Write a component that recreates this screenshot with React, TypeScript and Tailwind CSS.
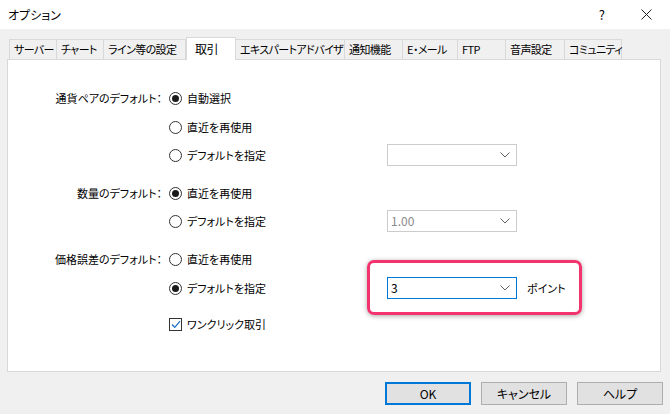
import React from 'react';

const tabs: { label: string; width: string }[] = [
  { label: 'サーバー', width: 'w-[48px]' },
  { label: 'チャート', width: 'w-[48px]' },
  { label: 'ライン等の設定', width: 'w-[83px]' },
  { label: '取引', width: 'w-[50px]' },
  { label: 'エキスパートアドバイザ', width: 'w-[110px]' },
  { label: '通知機能', width: 'w-[59px]' },
  { label: 'E・メール', width: 'w-[56px]' },
  { label: 'FTP', width: 'w-[49px]' },
  { label: '音声設定', width: 'w-[60px]' },
  { label: 'コミュニティ', width: 'w-[58px]' },
];

const Radio = ({ checked, label }: { checked?: boolean; label: string }) => (
  <div className="flex items-center">
    <span className="flex h-[13px] w-[13px] items-center justify-center rounded-full border border-[#333333] bg-white">
      {checked && <span className="h-[7px] w-[7px] rounded-full bg-[#1a1a1a]" />}
    </span>
    <span className="ml-[5px]">{label}</span>
  </div>
);

const Chevron = () => (
  <svg width="10" height="6" viewBox="0 0 10 6" className="mr-[6px]">
    <path d="M0.5 0.5 L5 5 L9.5 0.5" fill="none" stroke="#606060" strokeWidth="1" />
  </svg>
);

const Select = ({ value, active, disabled }: { value?: string; active?: boolean; disabled?: boolean }) => (
  <div
    className={`flex h-[22px] w-[130px] items-center justify-between bg-white ${
      active ? 'border border-[#0078d7]' : 'border border-[#cccccc]'
    }`}
  >
    <span className={`pl-[3px] text-[12px] ${disabled ? 'text-[#8a8a8a]' : 'text-black'}`}>{value}</span>
    <Chevron />
  </div>
);

const Row = ({ label, mt, children }: { label?: string; mt: string; children: React.ReactNode }) => (
  <div className={`flex h-[28px] items-center ${mt}`}>
    <div className="w-[154px] shrink-0 whitespace-nowrap text-right">{label}</div>
    <div className="ml-[7px] flex flex-1 items-center">{children}</div>
  </div>
);

const Button = ({ label, primary }: { label: string; primary?: boolean }) => (
  <div
    className={`flex h-[23px] w-[86px] items-center justify-center bg-[#e1e1e1] ${
      primary ? 'border-2 border-[#0078d7]' : 'border border-[#adadad]'
    }`}
  >
    {label}
  </div>
);

export default function App() {
  return (
    <div
      className="flex h-[414px] w-[670px] flex-col overflow-hidden bg-[#f0f0f0] text-[11px] leading-none text-black [font-feature-settings:'palt']"
      style={{ fontFamily: '"Noto Sans CJK JP", "Noto Sans", sans-serif' }}
    >
      {/* title bar */}
      <div className="flex h-[29px] shrink-0 items-center bg-white">
        <span className="ml-[8px] flex-1 text-[12px]">オプション</span>
        <span className="mr-[36px] text-[13px]">?</span>
        <svg width="11" height="11" viewBox="0 0 11 11" className="mr-[18px]">
          <path d="M0.5 0.5 L10.5 10.5 M10.5 0.5 L0.5 10.5" stroke="#222" strokeWidth="1" />
        </svg>
      </div>

      {/* tabs */}
      <div className="ml-[9px] mt-[8px] flex h-[22px] items-end tracking-[-0.6px]">
        {tabs.map((t) =>
          t.label === '取引' ? (
            <div
              key={t.label}
              className={`${t.width} relative z-10 -mb-px flex h-[23px] items-center whitespace-nowrap border border-b-0 border-[#d9d9d9] bg-white pl-[8px] text-[12px]`}
            >
              {t.label}
            </div>
          ) : (
            <div
              key={t.label}
              className={`${t.width} -ml-px flex h-[20px] items-center whitespace-nowrap border border-b-0 border-[#d9d9d9] bg-[#f0f0f0] pl-[4px] first:ml-0`}
            >
              {t.label}
            </div>
          )
        )}
      </div>

      {/* panel */}
      <div className="ml-[7px] h-[313px] w-[654px] border border-[#d9d9d9] bg-white pt-[24px]">
        <Row label="通貨ペアのデフォルト：" mt="mt-0">
          <Radio checked label="自動選択" />
        </Row>
        <Row mt="mt-px">
          <Radio label="直近を再使用" />
        </Row>
        <Row mt="mt-0">
          <div className="w-[218px]">
            <Radio label="デフォルトを指定" />
          </div>
          <Select disabled />
        </Row>
        <Row label="数量のデフォルト：" mt="mt-[10px]">
          <Radio checked label="直近を再使用" />
        </Row>
        <Row mt="mt-0">
          <div className="w-[218px]">
            <Radio label="デフォルトを指定" />
          </div>
          <Select value="1.00" disabled />
        </Row>
        <Row label="価格誤差のデフォルト：" mt="mt-[10px]">
          <Radio label="直近を再使用" />
        </Row>
        <Row mt="mt-px">
          <div className="w-[218px]">
            <Radio checked label="デフォルトを指定" />
          </div>
          <div className="relative flex items-center">
            <Select value="3" active />
            <span className="ml-[10px]">ポイント</span>
            <div className="pointer-events-none absolute left-[-20px] top-[-17px] h-[55px] w-[215px] rounded-[7px] border-[3px] border-[#f2336e] shadow-[0_1px_5px_rgba(0,0,0,0.35)]" />
          </div>
        </Row>
        <Row mt="mt-[8px]">
          <div className="flex items-center">
            <span className="flex h-[13px] w-[13px] items-center justify-center border border-[#333333] bg-white">
              <svg width="10" height="9" viewBox="0 0 10 9">
                <path d="M1 4.5 L3.8 7.3 L9 1.2" fill="none" stroke="#1e72c8" strokeWidth="1.3" />
              </svg>
            </span>
            <span className="ml-[5px]">ワンクリック取引</span>
          </div>
        </Row>
      </div>

      {/* buttons */}
      <div className="mr-[7px] mt-[10px] flex justify-end gap-[10px] text-[12px]">
        <Button label="OK" primary />
        <Button label="キャンセル" />
        <Button label="ヘルプ" />
      </div>
    </div>
  );
}
